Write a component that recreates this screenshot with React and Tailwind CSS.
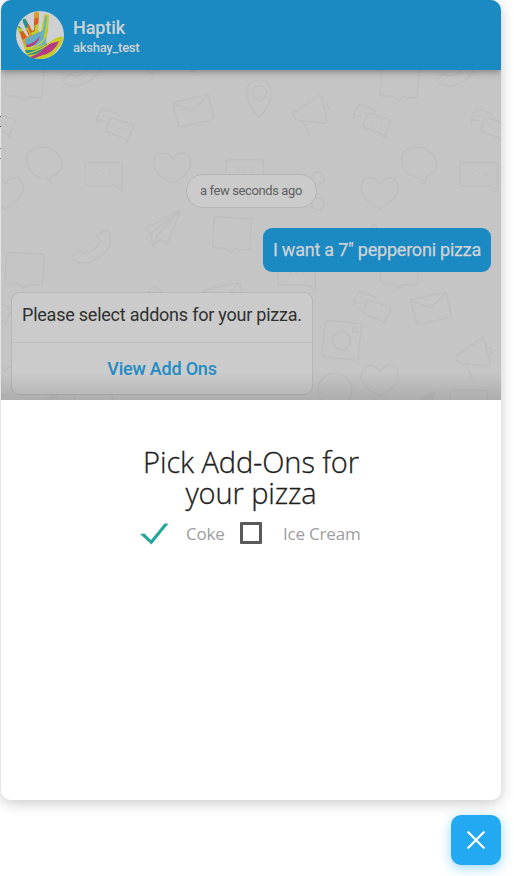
import React from "react";

function Note({ x, y }) {
  return (
    <path
      transform={`translate(${x} ${y})`}
      d="M9 252.3 L42 254.2 Q44.300 254.500 44.200 256.500 L42.300 283.500 Q42 285.700 40 285.500 L27.500 284.500 L23 288.500 L18.500 284.200 L7 283.300 Q5 283 5.200 281 L6.700 254 Q7 252 9 252.300 Z"
    />
  );
}

function Phone({ x, y }) {
  return (
    <path
      transform={`translate(${x} ${y})`}
      d="M72.500 256 L79 251.300 Q81 250 82.500 252.500 Q84 254.500 88 252.500 Q96 249.500 99.500 242.500 Q101 239.500 98.500 238 Q96.500 236 98.500 234.500 L105.500 230.200 Q107.500 229.500 109 232.500 Q113.500 243 105.500 252 Q98 260.500 86.500 263 Q76.500 263.500 72.500 258.500 Q71.500 257 72.500 256 Z"
    />
  );
}

function Chats({ x, y }) {
  return (
    <g transform={`translate(${x} ${y})`}>
      <path d="M105 121 L98.500 120 L96 122.500 L97.500 117 L101 109.800 Q102 108.300 103.500 109 L117 113.800 Q118.500 114.500 117.500 117" />
      <path d="M112 117.500 L132 124.300 Q134 125 133.500 127 L128.500 137.500 L127.500 142 L123.500 138 L107 131.500 Q105.500 130.500 106 129 L110 119 Q110.700 117.300 112 117.500 Z" />
      <path strokeDasharray="1.500 3" d="M114.500 127 L126 130 M103 116 L110 118" />
    </g>
  );
}

function Envelope({ x, y }) {
  return (
    <g transform={`translate(${x} ${y})`}>
      <path d="M174 102.300 L206 94.700 Q208 94.300 208.700 96.500 L213.300 117 Q213.700 119 211.700 119.700 L181.500 126.800 Q179.300 127.200 178.500 125 L172.700 104.500 Q172.200 102.700 174 102.300 Z" />
      <path d="M173 103.500 L191 109.800 Q193.500 110.500 195 108.500 L207.500 95.500" />
    </g>
  );
}

function Speech({ x, y }) {
  return (
    <path
      transform={`translate(${x} ${y})`}
      d="M46.500 178.500 L50.500 183.500 L51.500 176.500 Q62 173 62 164 Q60 151 46 147.500 Q31 145.500 27 156 Q24.500 167 34 174.500 Q40 178.500 46.500 178.500 Z"
    />
  );
}

function TextBubble({ x, y }) {
  return (
    <g transform={`translate(${x} ${y})`}>
      <path d="M87.500 162.500 H120 Q122.300 162.500 122.300 165 V190.500 L115.500 185.800 H87.500 Q85.200 185.800 85.200 183.500 V165 Q85.200 162.500 87.500 162.500 Z" />
      <path strokeWidth="2.500" strokeLinecap="round" d="M97.200 173.800 h.1 M103.700 173.800 h.1 M110.200 173.800 h.1" />
    </g>
  );
}

function Heart({ x, y }) {
  return (
    <path
      transform={`translate(${x} ${y})`}
      d="M172.500 159 Q176.500 152.500 183 153 Q191 154.500 190.800 164 Q190 174 172.500 183.500 Q154.500 175 153.700 164 Q153.700 154 162 153 Q169 152.500 172.500 159 Z"
    />
  );
}

function Megaphone({ x, y }) {
  return (
    <path
      transform={`translate(${x} ${y})`}
      d="M294 112.500 L317.500 96 Q320 94.800 321.500 97.500 L327 120.500 Q327 123 324.500 123.200 L297.500 120.500 Q291.500 117 294 112.500 Z M303 121.500 L306.500 129 Q309.500 133.500 309 136.500 M325 105 Q328.500 104 328.700 109 Q328.500 112 326.500 111.500"
    />
  );
}

function Plane({ x, y }) {
  return (
    <path
      transform={`translate(${x} ${y})`}
      d="M181 209.500 L144.500 229 L151 233.500 L153 246.500 L159.500 239.500 L167 243.500 Z L151 233.500 M181 209.500 L156.500 236.500 L153 246.500"
    />
  );
}

function Doodles() {
  return (
    <svg
      className="absolute inset-0 h-full w-full"
      viewBox="1 70 500 330"
      fill="none"
      stroke="#bfbfbf"
      strokeWidth="1.500"
      strokeLinejoin="round"
      aria-hidden="true"
    >
      <Note x={0} y={-187.500} />
      <Note x={375} y={-187.500} />
      <Note x={0} y={0} />
      <Note x={207.500} y={-35.500} />
      <Note x={375} y={0} />
      <Phone x={-9.500} y={-177} />
      <Phone x={365} y={-177} />
      <Phone x={0} y={0} />
      <Chats x={0} y={0} />
      <Chats x={-118} y={-5} />
      <Chats x={257} y={-4.500} />
      <Chats x={375} y={0} />
      <Chats x={257} y={182.500} />
      <Chats x={-122} y={183} />
      <Envelope x={0} y={0} />
      <Envelope x={238} y={197.500} />
      <Envelope x={31} y={188} />
      <Speech x={0} y={0} />
      <Speech x={375} y={0} />
      <TextBubble x={0} y={0} />
      <TextBubble x={141} y={-3} />
      <TextBubble x={375} y={0} />
      <TextBubble x={193} y={99.500} />
      <TextBubble x={365} y={228} />
      <TextBubble x={-10} y={228} />
      <Heart x={0} y={0} />
      <Heart x={207.500} y={25} />
      <Heart x={207.500} y={212.500} />
      <Heart x={-167.500} y={25} />
      <Heart x={-167.500} y={212.500} />
      <Megaphone x={0} y={0} />
      <Megaphone x={163} y={243} />
      <Plane x={0} y={0} />
      <Plane x={254} y={182} />
      <Plane x={-121} y={182} />
      <path d="M259.500 117.500 Q255 113 251 106 Q246 98 246.500 91 Q248 81 259 80.500 Q270 81 271.500 91 Q271.500 99 267 107 Q263 114 259.500 117.500 Z" />
      <circle cx="259.500" cy="93" r="7" />
      <circle cx="318" cy="178" r="6.300" />
      <circle cx="318" cy="203.500" r="6.300" />
      <circle cx="374" cy="228" r="3" />
      <circle cx="155" cy="293" r="6" />
      <circle cx="335" cy="390.500" r="17" />
      <rect x="323.500" y="322" width="36.500" height="36.500" rx="3.500" transform="rotate(6 342 340)" />
      <circle cx="341.500" cy="340.500" r="9" />
      <circle cx="355" cy="329.500" r="2.500" />
      <path d="M148 71 l4 3 3-3 M190 70 l4 2 3-2" />
    </svg>
  );
}

function HandLogo() {
  return (
    <svg className="h-12 w-12 shrink-0" viewBox="0 0 48 48" aria-hidden="true">
      <defs>
        <clipPath id="disc">
          <circle cx="24" cy="24" r="24" />
        </clipPath>
        <clipPath id="hand">
          <path d="M1 17 Q2 13 5 17 L11 26 L13 25 L7 11 Q6 7 10 8 L16 20 L18 19 L18 3 Q19 0 23 1 L22 20 L25 21 L28 5 Q29 2 33 4 L32 20 Q29 29 31 33 L40 27 Q46 24 48 27 L45 34 L36 45 L30 48 H14 L9 41 Q9 34 1 17 Z" />
        </clipPath>
      </defs>
      <g clipPath="url(#disc)">
        <rect width="48" height="48" fill="#cfd0d1" />
        <g clipPath="url(#hand)">
          <rect width="48" height="48" fill="#c2cb2a" />
          <path fill="#268d9d" d="M0 15 L8 6 L14 15 L7 19 Z M3 20 L10 24 L9 29 Z" />
          <path fill="#d45f20" d="M4 21 L11 18 L15 26 L6 29 Z M11 14 L18 10 L19 20 L14 22 Z M17 5 L23 3 V12 L17 16 Z" />
          <path fill="#d99c32" d="M17 0 L25 0 L23 6 L18 8 Z M6 30 L15 22 L18 26 L8 34 Z" />
          <path fill="#66adc3" d="M9 28 L27 19 L28 28 L20 35 L10 36 Z" />
          <path fill="#b6398b" d="M10 34 Q18 33 24 25 Q22 34 11 37 Z" />
          <path fill="#69b1c3" d="M29 6 L31 5 L29 21 L24 29 L27 20 Z M25 31 L31 25 L30 33 L15 38 Z" />
          <path fill="#218b94" d="M9 39 Q21 41 32 32 Q25 44 12 44 Z" />
          <path fill="#b63a84" d="M14 46 Q26 42 31 33 L43 30 Q39 42 24 45 L17 48 Z" />
          <path fill="none" stroke="#d7d42c" strokeWidth="1.200" d="M9 37 Q23 37 29 27 M10 43 Q24 40 34 32 L44 29" />
        </g>
      </g>
    </svg>
  );
}

function ChatHeader() {
  return (
    <header className="relative z-10 flex h-[70px] shrink-0 items-center gap-[9px] bg-[#1b89c2] pl-[15px] text-[#cfd3d6] shadow-[0_2px_7px_rgba(0,0,0,0.35)]">
      <HandLogo />
      <div className="pt-[3px] font-[Roboto,sans-serif]">
        <h1 className="text-[18px] leading-[21px] font-medium tracking-[-0.1px]">Haptik</h1>
        <p className="text-[13px] leading-[19px] font-medium tracking-[-0.25px]">akshay_test</p>
      </div>
    </header>
  );
}

function Conversation() {
  return (
    <section className="relative h-[330px] shrink-0 overflow-hidden bg-[#c5c5c5] font-[Roboto,sans-serif]">
      <Doodles />
      <div className="relative flex flex-col px-[10px] pt-[104px]">
        <div className="flex h-[34px] w-[131px] items-center justify-center self-center rounded-full border border-[#b5b5b5] bg-[#cbcbcb] text-[13px] tracking-[-0.4px] text-[#606060]">
          a few seconds ago
        </div>
        <div className="mt-5 flex h-11 w-[228px] items-center justify-center self-end rounded-[9px] bg-[#1b89c2] pb-0.5 text-[18px] tracking-[-0.22px] whitespace-nowrap text-[#cfd3d6] [-webkit-text-stroke:0.25px_#cfd3d6]">
          I want a 7" pepperoni pizza
        </div>
        <div className="mt-5 flex h-[103px] w-[302px] flex-col rounded-[9px] border border-[#b7b7b7] bg-[#cbcbcb] text-[18px]">
          <p className="flex h-[50px] items-center border-b border-[#c0c0c0] pb-[7px] pl-[10px] tracking-[-0.23px] whitespace-nowrap text-[#303030]">
            Please select addons for your pizza.
          </p>
          <button className="flex-1 font-medium tracking-[-0.22px] text-[#1f8cc5]">View Add Ons</button>
        </div>
      </div>
      <div className="absolute inset-x-0 bottom-0 h-7 bg-linear-to-b from-black/0 to-black/12" />
    </section>
  );
}

function AddOns() {
  return (
    <section className="flex flex-1 flex-col items-center bg-white pt-[46px] font-['Open_Sans','Noto_Sans',sans-serif]">
      <h2 className="text-center text-[29px] leading-[31px] font-light tracking-[-0.1px] text-[#202020] [-webkit-text-stroke:0.3px_#202020]">
        Pick Add-Ons for
        <br />
        your pizza
      </h2>
      <div className="mt-[12px] flex h-[28px] w-[222px] items-center text-[17px] text-[#9e9e9e]">
        <svg className="h-6 w-[30px] shrink-0" viewBox="0 0 30 24" aria-hidden="true">
          <path d="M0 12 L4.500 11.500 L11 18 L24.500 1.500 L28.500 1.500 L11.500 22.500 Z" fill="#26a69a" />
        </svg>
        <span className="ml-4 w-[54px] tracking-[-0.2px]">Coke</span>
        <span className="mb-0.5 h-[22px] w-[22px] shrink-0 rounded-[1px] border-[3px] border-[#5a5a5a]" />
        <span className="ml-[21px] tracking-[-0.2px] whitespace-nowrap">Ice Cream</span>
      </div>
    </section>
  );
}

export default function App() {
  return (
    <div className="relative h-[876px] w-[514px] overflow-hidden bg-white">
      <main className="ml-px flex h-[800px] w-[500px] flex-col overflow-hidden rounded-[10px] shadow-[0_3px_14px_rgba(0,0,0,0.22)]">
        <ChatHeader />
        <Conversation />
        <AddOns />
      </main>
      <button
        aria-label="Close"
        className="mt-[15px] ml-[451px] flex h-[50px] w-[50px] items-center justify-center rounded-[10px] bg-[#22a9f2] shadow-[0_3px_12px_rgba(34,169,242,0.45)]"
      >
        <svg className="h-5 w-5" viewBox="0 0 20 20" stroke="white" strokeWidth="2.300" strokeLinecap="round">
          <path d="M2.300 2.300 L17.700 17.700 M17.700 2.300 L2.300 17.700" />
        </svg>
      </button>
      <div className="absolute top-[116px] left-0 h-[11px] w-px border-y border-[#4d4d4d] bg-[#c5cbd1]" />
      <div className="absolute top-[148px] left-0 h-[11px] w-px border-y border-[#6488b8]" />
    </div>
  );
}
